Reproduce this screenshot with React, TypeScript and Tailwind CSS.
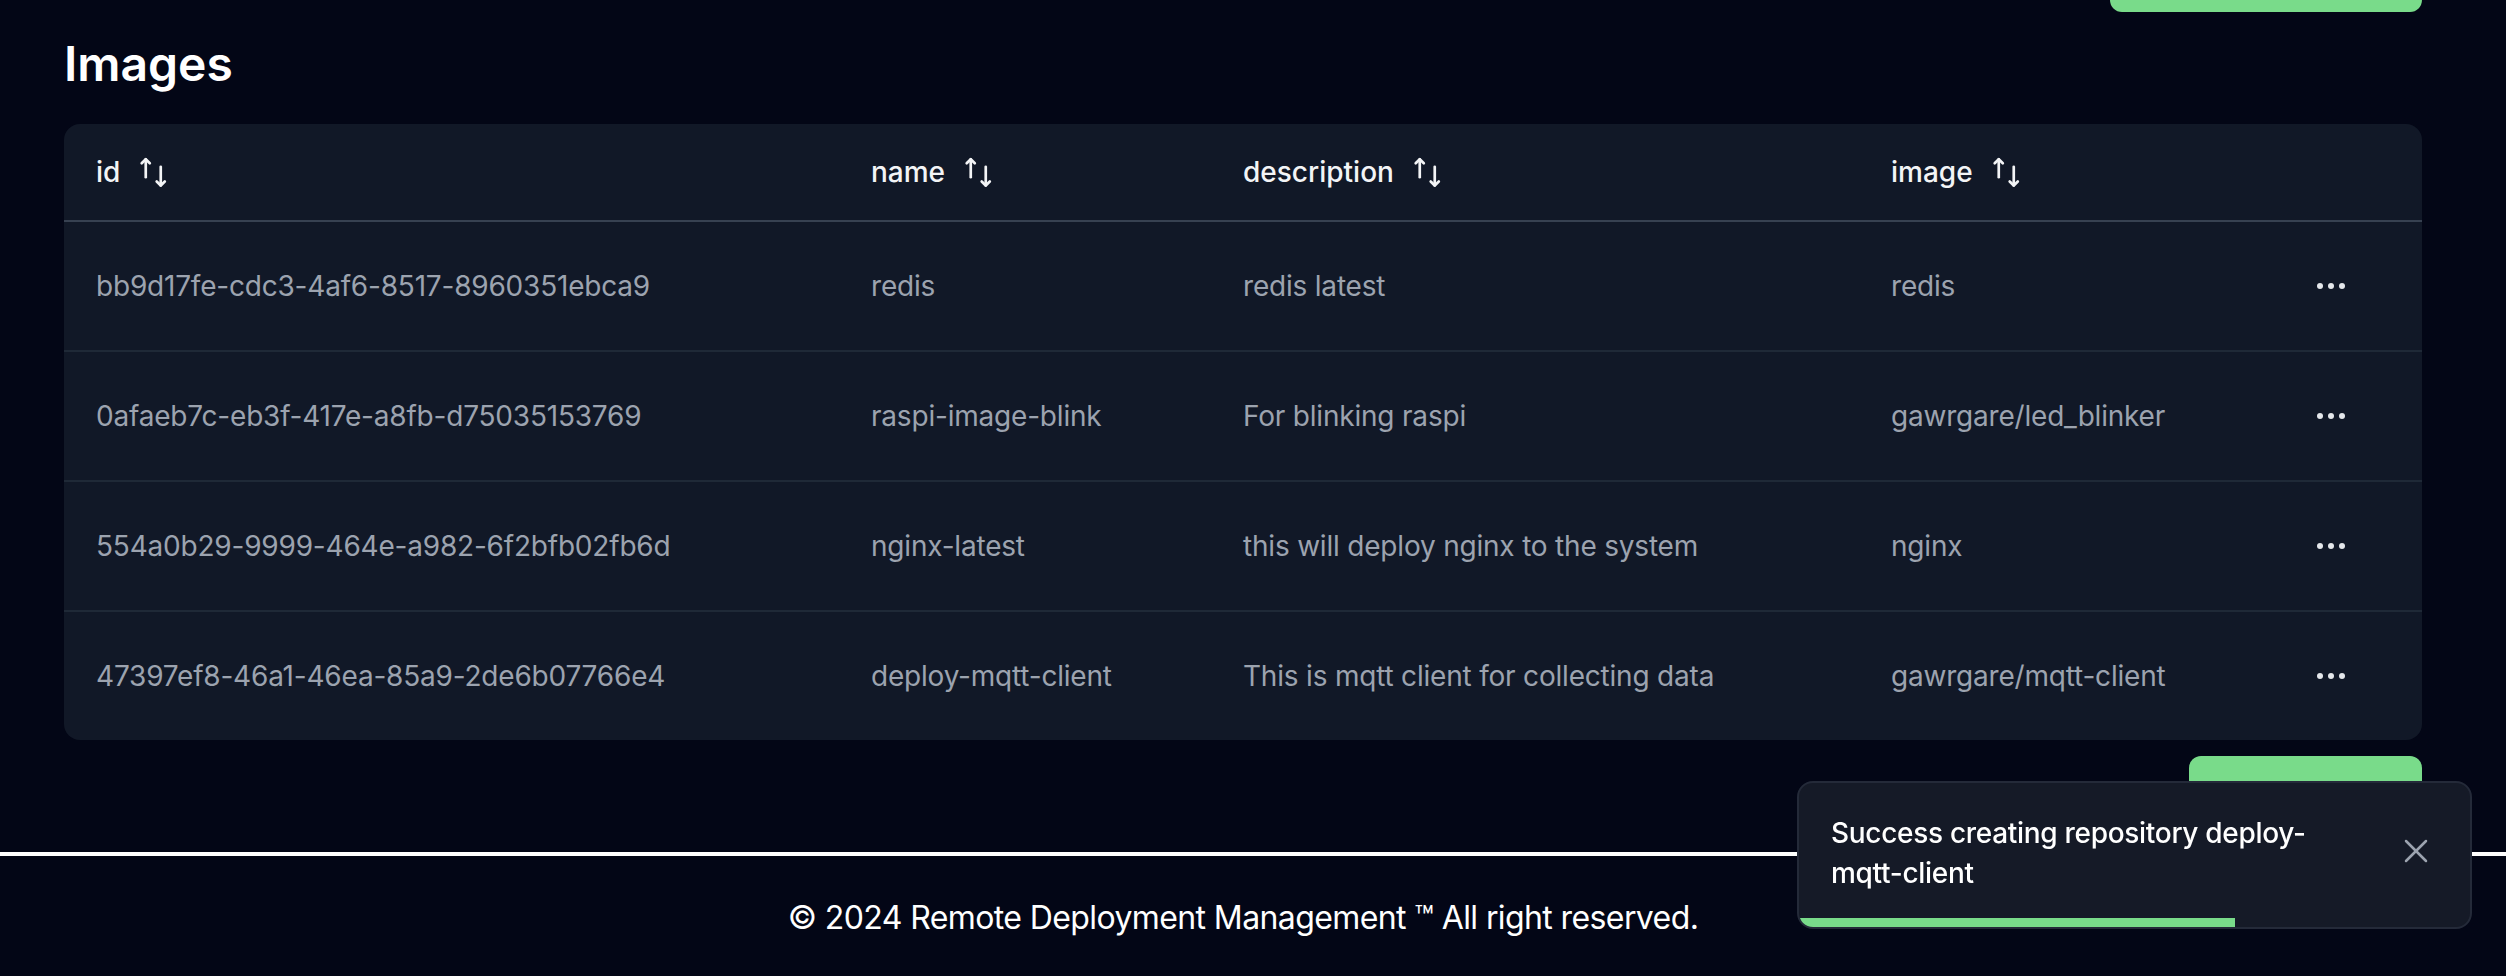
import { Plus } from "lucide-react";

const images = [
  { id: "bb9d17fe-cdc3-4af6-8517-8960351ebca9", name: "redis", description: "redis latest", image: "redis" },
  { id: "0afaeb7c-eb3f-417e-a8fb-d75035153769", name: "raspi-image-blink", description: "For blinking raspi", image: "gawrgare/led_blinker" },
  { id: "554a0b29-9999-464e-a982-6f2bfb02fb6d", name: "nginx-latest", description: "this will deploy nginx to the system", image: "nginx" },
  { id: "47397ef8-46a1-46ea-85a9-2de6b07766e4", name: "deploy-mqtt-client", description: "This is mqtt client for collecting data", image: "gawrgare/mqtt-client" },
];

const SortIcon = () => (
  <svg width="36" height="36" viewBox="0 0 24 24" fill="none" stroke="currentColor" strokeWidth="1.8" strokeLinecap="round" strokeLinejoin="round" className="ml-4">
    <path d="M6.5 15.5V3.5" />
    <path d="M3.8 6.2 6.5 3.5l2.7 2.7" />
    <path d="M16.5 8.5v12.5" />
    <path d="M13.8 18.3l2.7 2.7 2.7-2.7" />
  </svg>
);

const Dots = () => (
  <svg width="32" height="12" viewBox="0 0 32 12" fill="currentColor">
    <circle cx="5" cy="6" r="3" />
    <circle cx="16" cy="6" r="3" />
    <circle cx="27" cy="6" r="3" />
  </svg>
);

const cols = "grid grid-cols-[775px_372px_648px_1fr_64px] items-center pl-8 pr-[59px]";

const Header = ({ label }: { label: string }) => (
  <div className="flex items-center text-[28px] font-medium text-[#f3f4f6]">
    <span>{label}</span>
    <SortIcon />
  </div>
);

export default function App() {
  return (
    <div className="min-h-screen bg-[#030616] text-white" style={{ fontFamily: "Inter, 'Noto Sans', sans-serif" }}>
      <div className="w-[2486px] px-16">
        <div className="flex justify-end">
          <div className="h-3 w-[312px] rounded-b-[12px] bg-[#79db8a]" />
        </div>

        <h1 className="mt-5 text-[48px] leading-[64px] font-semibold text-white">Images</h1>

        <div className="mt-7 rounded-2xl bg-[#111827]">
          <div className={`${cols} h-[98px] border-b-2 border-[#374151]`}>
            <Header label="id" />
            <Header label="name" />
            <Header label="description" />
            <Header label="image" />
            <div />
          </div>
          {images.map((row, i) => (
            <div
              key={row.id}
              className={`${cols} text-[28px] tracking-[-0.2px] text-[#9ca3af] ${i < images.length - 1 ? "h-[130px] border-b-2 border-[#1f2937]" : "h-[128px]"}`}
            >
              <div>{row.id}</div>
              <div>{row.name}</div>
              <div>{row.description}</div>
              <div>{row.image}</div>
              <div className="flex justify-center text-[#e5e7eb]">
                <Dots />
              </div>
            </div>
          ))}
        </div>

        <div className="mt-4 mb-4 flex justify-end">
          <button className="flex h-20 w-[233px] items-center justify-center gap-3 rounded-[12px] bg-[#79db8a] text-[28px] font-medium text-[#0b0f1a]">
            <Plus size={32} strokeWidth={2.5} />
            <span>Add Image</span>
          </button>
        </div>
      </div>

      <footer className="border-t-4 border-white">
        <div className="w-[2486px] pt-[38px] pb-10 text-center text-[32px] leading-[48px] tracking-[-0.6px] text-white">
          © 2024 Remote Deployment Management ™ All right reserved.
        </div>
      </footer>

      <div className="fixed right-[34px] bottom-[47px] w-[675px] overflow-hidden rounded-2xl border-2 border-[#242a39] bg-[#151a27]">
        <div className="flex items-center justify-between pt-[30px] pr-[42px] pb-[25px] pl-[32px]">
          <p className="w-[520px] text-[28px] leading-[40px] font-medium tracking-[-0.3px] text-white">
            Success creating repository deploy-mqtt-client
          </p>
          <svg width="24" height="24" viewBox="0 0 24 24" fill="none" stroke="#9ca3af" strokeWidth="2.5" strokeLinecap="round" className="-mt-1">
            <path d="M2 2l20 20" />
            <path d="M22 2 2 22" />
          </svg>
        </div>
        <div className="h-[9px] w-[65%] rounded-bl-2xl bg-[#79db8a]" />
      </div>
    </div>
  );
}
